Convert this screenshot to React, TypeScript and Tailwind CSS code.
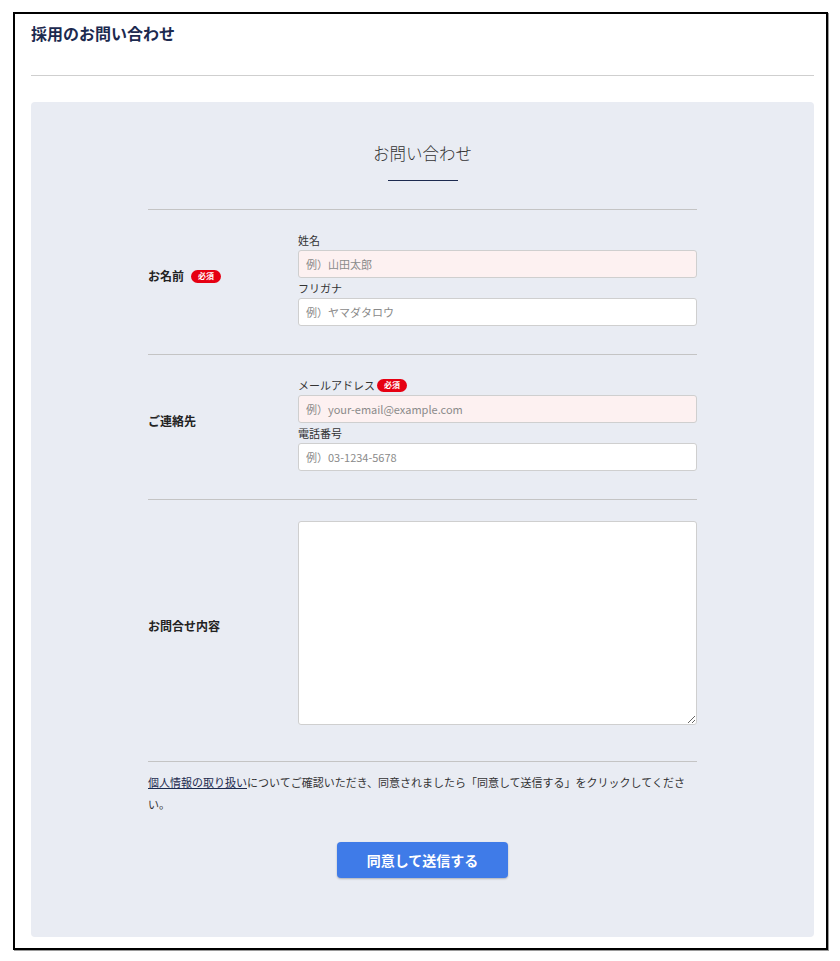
import React from 'react';

const jp = '[font-family:"Noto_Sans_CJK_JP","Noto_Sans",sans-serif]';

const Required: React.FC = () => (
  <span className="inline-flex h-[13px] items-center rounded-full bg-[#e60012] px-[7px] text-[8px] font-bold leading-none text-white">
    必須
  </span>
);

type FieldProps = {
  label: React.ReactNode;
  placeholder: string;
  required?: boolean;
};

const Field: React.FC<FieldProps> = ({ label, placeholder, required }) => (
  <div>
    <div className="flex h-[20px] items-center gap-[2px] text-[11px] text-[#333]">{label}</div>
    <input
      type="text"
      placeholder={placeholder}
      className={`block h-[28px] w-full rounded-[3px] border border-[#cfcfcf] px-[7px] text-[11px] text-[#333] outline-none placeholder:text-[#8a8a8a] ${
        required ? 'bg-[#fdf1f1]' : 'bg-white'
      }`}
    />
  </div>
);

type RowProps = {
  title: React.ReactNode;
  children: React.ReactNode;
  className?: string;
  titleClass?: string;
};

const Row: React.FC<RowProps> = ({ title, children, className = '', titleClass = 'pb-[4px]' }) => (
  <div className={`flex border-t border-[#c4c4c4] ${className}`}>
    <div className={`flex w-[150px] shrink-0 items-center gap-[7px] text-[12px] font-bold text-[#222] ${titleClass}`}>
      {title}
    </div>
    <div className="flex-1">{children}</div>
  </div>
);

const App: React.FC = () => {
  return (
    <div className={`min-h-screen bg-white pl-[13px] pt-[12px] ${jp}`}>
      <div className="h-[938px] w-[815px] border-2 border-black pl-[16px] pr-[12px] shadow-[1px_1px_0_#9a9a9a]">
        <h1 className="pt-[7px] text-[16px] font-bold leading-[24px] text-[#1c2a4f]">採用のお問い合わせ</h1>
        <div className="mt-[30px] border-t border-[#cfcfcf]" />

        <div className="mt-[26px] h-[835px] rounded-[4px] bg-[#e9ecf3] pt-[38px]">
          <div className="mx-auto w-[549px]">
            <h2 className="text-center text-[16.5px] font-light leading-[27px] text-[#333]">お問い合わせ</h2>
            <div className="mx-auto mt-[13px] h-px w-[70px] bg-[#1c2a4f]" />

            <Row
              className="mt-[28px] pb-[28px] pt-[20px]"
              title={
                <>
                  お名前
                  <Required />
                </>
              }
            >
              <Field label="姓名" placeholder="例）山田太郎" required />
              <Field label="フリガナ" placeholder="例）ヤマダタロウ" />
            </Row>

            <Row className="pb-[28px] pt-[20px]" title="ご連絡先">
              <Field
                label={
                  <>
                    メールアドレス
                    <Required />
                  </>
                }
                placeholder="例）your-email@example.com"
                required
              />
              <Field label="電話番号" placeholder="例）03-1234-5678" />
            </Row>

            <Row className="pb-[36px] pt-[21px]" titleClass="pt-[6px]" title="お問合せ内容">
              <textarea className="block h-[204px] w-full rounded-[3px] border border-[#cfcfcf] bg-white p-[7px] text-[11px] outline-none" />
            </Row>

            <div className="border-t border-[#c4c4c4] pt-[9px]">
              <p className="text-[11px] leading-[22px] text-[#333]">
                <a href="#" className="text-[#1c2a4f] underline">
                  個人情報の取り扱い
                </a>
                についてご確認いただき、同意されましたら「同意して送信する」をクリックしてください。
              </p>
            </div>

            <div className="mt-[27px] flex justify-center">
              <button
                type="button"
                className="h-[36px] w-[171px] rounded-[4px] bg-[#3f7be8] text-[14px] font-bold text-white shadow-[0_1px_2px_rgba(0,0,0,0.25)]"
              >
                同意して送信する
              </button>
            </div>
          </div>
        </div>
      </div>
    </div>
  );
};

export default App;
